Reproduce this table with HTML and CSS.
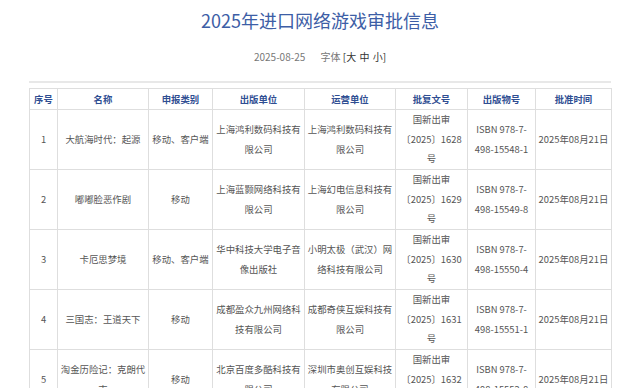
FILE: index.html
```html
<!DOCTYPE html>
<html lang="zh-CN">
<head>
<meta charset="utf-8">
<title>2025年进口网络游戏审批信息</title>
<link rel="stylesheet" href="styles.css">
</head>
<body>
<div class="page">
  <h1 class="title">2025年进口网络游戏审批信息</h1>
  <div class="meta">
    <span class="date">2025-08-25</span>
    <span class="fontsize">字体 <span class="sizes">[大 中 小]</span></span>
  </div>
  <table class="list">
    <colgroup>
      <col class="c1"><col class="c2"><col class="c3"><col class="c4"><col class="c5"><col class="c6"><col class="c7"><col class="c8">
    </colgroup>
    <thead>
      <tr><th>序号</th><th>名称</th><th>申报类别</th><th>出版单位</th><th>运营单位</th><th>批复文号</th><th>出版物号</th><th>批准时间</th></tr>
    </thead>
    <tbody>
      <tr><td>1</td><td>大航海时代：起源</td><td>移动、客户端</td><td>上海鸿利数码科技有限公司</td><td>上海鸿利数码科技有限公司</td><td>国新出审〔2025〕1628号</td><td>ISBN 978-7-<br>498-15548-1</td><td class="nw">2025年08月21日</td></tr>
      <tr><td>2</td><td>嘟嘟脸恶作剧</td><td>移动</td><td>上海蓝颢网络科技有限公司</td><td>上海幻电信息科技有限公司</td><td>国新出审〔2025〕1629号</td><td>ISBN 978-7-<br>498-15549-8</td><td class="nw">2025年08月21日</td></tr>
      <tr><td>3</td><td>卡厄思梦境</td><td>移动、客户端</td><td>华中科技大学电子音像出版社</td><td>小明太极（武汉）网络科技有限公司</td><td>国新出审〔2025〕1630号</td><td>ISBN 978-7-<br>498-15550-4</td><td class="nw">2025年08月21日</td></tr>
      <tr><td>4</td><td>三国志：王道天下</td><td>移动</td><td>成都盈众九州网络科技有限公司</td><td>成都奇侠互娱科技有限公司</td><td>国新出审〔2025〕1631号</td><td>ISBN 978-7-<br>498-15551-1</td><td class="nw">2025年08月21日</td></tr>
      <tr><td>5</td><td>淘金历险记：克朗代克</td><td>移动</td><td>北京百度多酷科技有限公司</td><td>深圳市奥创互娱科技有限公司</td><td>国新出审〔2025〕1632号</td><td>ISBN 978-7-<br>498-15552-8</td><td class="nw">2025年08月21日</td></tr>
    </tbody>
  </table>
</div>
</body>
</html>
```
FILE: styles.css
```css
html, body {
  margin: 0;
  padding: 0;
  background: #ffffff;
}
body {
  font-family: "Noto Sans CJK SC", "Noto Sans", sans-serif;
  color: #555555;
}
.page {
  width: 582px;
  margin-left: 29px;
}
.title {
  margin: 0;
  padding-top: 6px;
  font-size: 18px;
  line-height: 28px;
  font-weight: normal;
  color: #3d5ea6;
  text-align: center;
}
.meta {
  margin-top: 13px;
  height: 20px;
  line-height: 20px;
  font-size: 10px;
  color: #777777;
  text-align: center;
  border-bottom: 2px solid #e8e8e8;
  padding-bottom: 14px;
}
.date {
  margin-right: 13px;
}
.sizes {
  color: #333333;
  word-spacing: 1px;
}
.list {
  margin-top: 5px;
  width: 582px;
  table-layout: fixed;
  border-collapse: collapse;
  font-size: 9.4px;
}
.c1 { width: 28px; }
.c2 { width: 91px; }
.c3 { width: 64px; }
.c4 { width: 92px; }
.c5 { width: 91px; }
.c6 { width: 72px; }
.c7 { width: 68px; }
.c8 { width: 76px; }
.list th, .list td {
  border: 1px solid #dedede;
  text-align: center;
  vertical-align: middle;
  padding: 0 2px;
}
.list th {
  line-height: 20px;
  font-weight: bold;
  color: #2f4e92;
}
.list td {
  line-height: 19.67px;
  height: 59px;
  color: #555555;
}
.list td.nw {
  white-space: nowrap;
}
```
